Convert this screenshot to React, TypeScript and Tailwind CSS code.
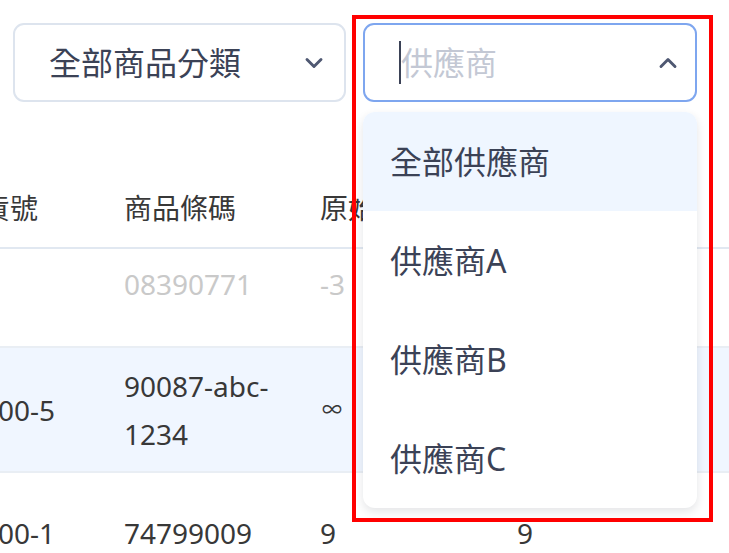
import { ChevronDown, ChevronUp } from "lucide-react";

const suppliers = ["全部供應商", "供應商A", "供應商B", "供應商C"];

type Row = {
  sku: string;
  barcode: string;
  qty: string;
  stock: string;
  muted?: boolean;
  active?: boolean;
  height: string;
  align: string;
};

const rows: Row[] = [
  { sku: "", barcode: "08390771", qty: "-3", stock: "", muted: true, height: "h-[99px]", align: "items-start pt-[11px]" },
  { sku: "100-5", barcode: "90087-abc-1234", qty: "∞", stock: "", active: true, height: "h-[125px]", align: "items-center" },
  { sku: "100-1", barcode: "74799009", qty: "9", stock: "9", height: "h-[122px]", align: "items-center" },
];

function Chevron({ up }: { up?: boolean }) {
  const Icon = up ? ChevronUp : ChevronDown;
  return <Icon className="h-[28px] w-[28px] text-[#4f5872]" strokeWidth={2.5} />;
}

export default function App() {
  return (
    <div className="relative h-[553px] w-[729px] overflow-hidden bg-white font-['Noto_Sans','Noto_Sans_CJK_TC',sans-serif]">
      {/* filter bar */}
      <div className="flex gap-[17px] pl-[13px] pt-[23px]">
        <div className="flex h-[79px] w-[333px] items-center justify-between rounded-[11px] border-2 border-[#dde4ee] pl-[34px] pr-[16px]">
          <span className="text-[32px] leading-none text-[#3b4256]">全部商品分類</span>
          <Chevron />
        </div>
        <div className="flex h-[79px] w-[334px] items-center justify-between rounded-[11px] border-2 border-[#7ea6ef] pl-[34px] pr-[13px]">
          <div className="flex items-center">
            <span className="h-[43px] w-[2px] bg-[#3b4256]" />
            <span className="text-[32px] leading-none text-[#c3c8d4]">供應商</span>
          </div>
          <Chevron up />
        </div>
      </div>

      {/* product table, scrolled horizontally */}
      <div className="mt-[68px] overflow-hidden text-[28px] text-[#383838]">
        <div className="ml-[-18px] w-[760px]">
          <div className="grid h-[79px] grid-cols-[142px_196px_197px_225px] items-center border-b-2 border-[#e1e8f1] pb-[2px]">
            <span>貨號</span>
            <span>商品條碼</span>
            <span>原始數量</span>
            <span>庫存</span>
          </div>
          {rows.map((r, i) => (
            <div
              key={i}
              className={`grid grid-cols-[142px_196px_197px_225px] border-b-2 border-[#e9eef4] leading-[48px] ${r.height} ${r.align} ${
                r.active ? "bg-[#f0f6ff]" : ""
              } ${r.muted ? "text-[#c9c9c9]" : ""}`}
            >
              <span>{r.sku}</span>
              <span className="pr-[20px]">{r.barcode}</span>
              <span className={r.qty === "∞" ? "pl-[2px] text-[20px]" : ""}>{r.qty}</span>
              <span>{r.stock}</span>
            </div>
          ))}
        </div>
      </div>

      {/* supplier dropdown menu */}
      <ul className="absolute left-[363px] top-[112px] w-[334px] overflow-hidden rounded-[12px] bg-white shadow-[0_4px_10px_rgba(30,41,59,0.12)]">
        {suppliers.map((s, i) => (
          <li
            key={s}
            className={`flex h-[99px] items-center pl-[27px] text-[32px] leading-none text-[#3b4256] ${
              i === 0 ? "bg-[#eff6ff]" : ""
            }`}
          >
            {s}
          </li>
        ))}
      </ul>

      {/* highlight frame */}
      <div className="pointer-events-none absolute left-[352px] top-[15px] h-[507px] w-[361px] border-4 border-[#ff0000]" />
    </div>
  );
}
